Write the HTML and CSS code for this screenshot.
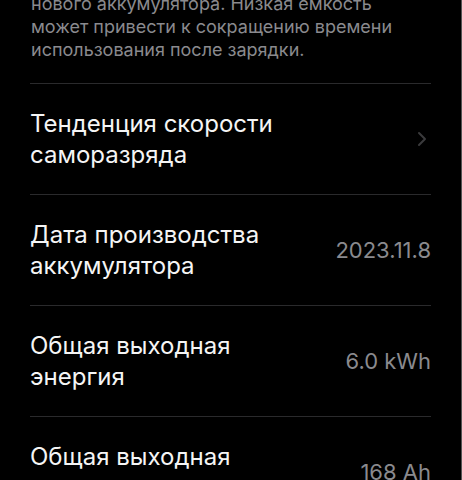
FILE: index.html
```html
<!DOCTYPE html>
<html lang="ru">
<head>
  <meta charset="UTF-8" />
  <meta name="viewport" content="width=device-width, initial-scale=1.0" />
  <title>Аккумулятор</title>
  <link rel="stylesheet" href="styles.css">
</head>
<body>
  <div class="screen">
    <p class="note">нового аккумулятора. Низкая емкость может привести к сокращению времени использования после зарядки.</p>
    <div class="list">
      <div class="row">
        <div class="label">Тенденция скорости<br>саморазряда</div>
        <svg class="chevron" width="10" height="16" viewBox="0 0 10 16">
          <path d="M2 2l6 6-6 6" fill="none" stroke="#3a3a3c" stroke-width="2" stroke-linecap="round" stroke-linejoin="round"/>
        </svg>
      </div>
      <div class="row">
        <div class="label">Дата производства<br>аккумулятора</div>
        <div class="value">2023.11.8</div>
      </div>
      <div class="row">
        <div class="label">Общая выходная<br>энергия</div>
        <div class="value">6.0 kWh</div>
      </div>
      <div class="row">
        <div class="label">Общая выходная<br>емкость</div>
        <div class="value">168 Ah</div>
      </div>
    </div>
  </div>
</body>
</html>
```

FILE: styles.css
```css
body {
  margin: 0;
  background-color: #000;
  font-family: Inter, "Noto Sans", sans-serif;
  overflow: hidden;
}
.screen {
  width: 462px;
  height: 480px;
  box-sizing: border-box;
  border-right: 1px solid #555;
  padding: 0 30px 0 31px;
  overflow: hidden;
}
.note {
  margin: -8px 0 0;
  padding-bottom: 22px;
  width: 380px;
  font-size: 18px;
  line-height: 23px;
  color: #8a8a8e;
}
.list {
  display: flex;
  flex-direction: column;
}
.row {
  display: flex;
  align-items: center;
  justify-content: space-between;
  min-height: 110px;
  border-top: 1px solid #2a2a2c;
  margin-left: -1px;
}
.label {
  font-size: 24px;
  line-height: 31px;
  color: #f5f5f5;
}
.value {
  font-size: 22px;
  color: #8a8a8e;
}
.chevron {
  margin-right: 4px;
}
```
